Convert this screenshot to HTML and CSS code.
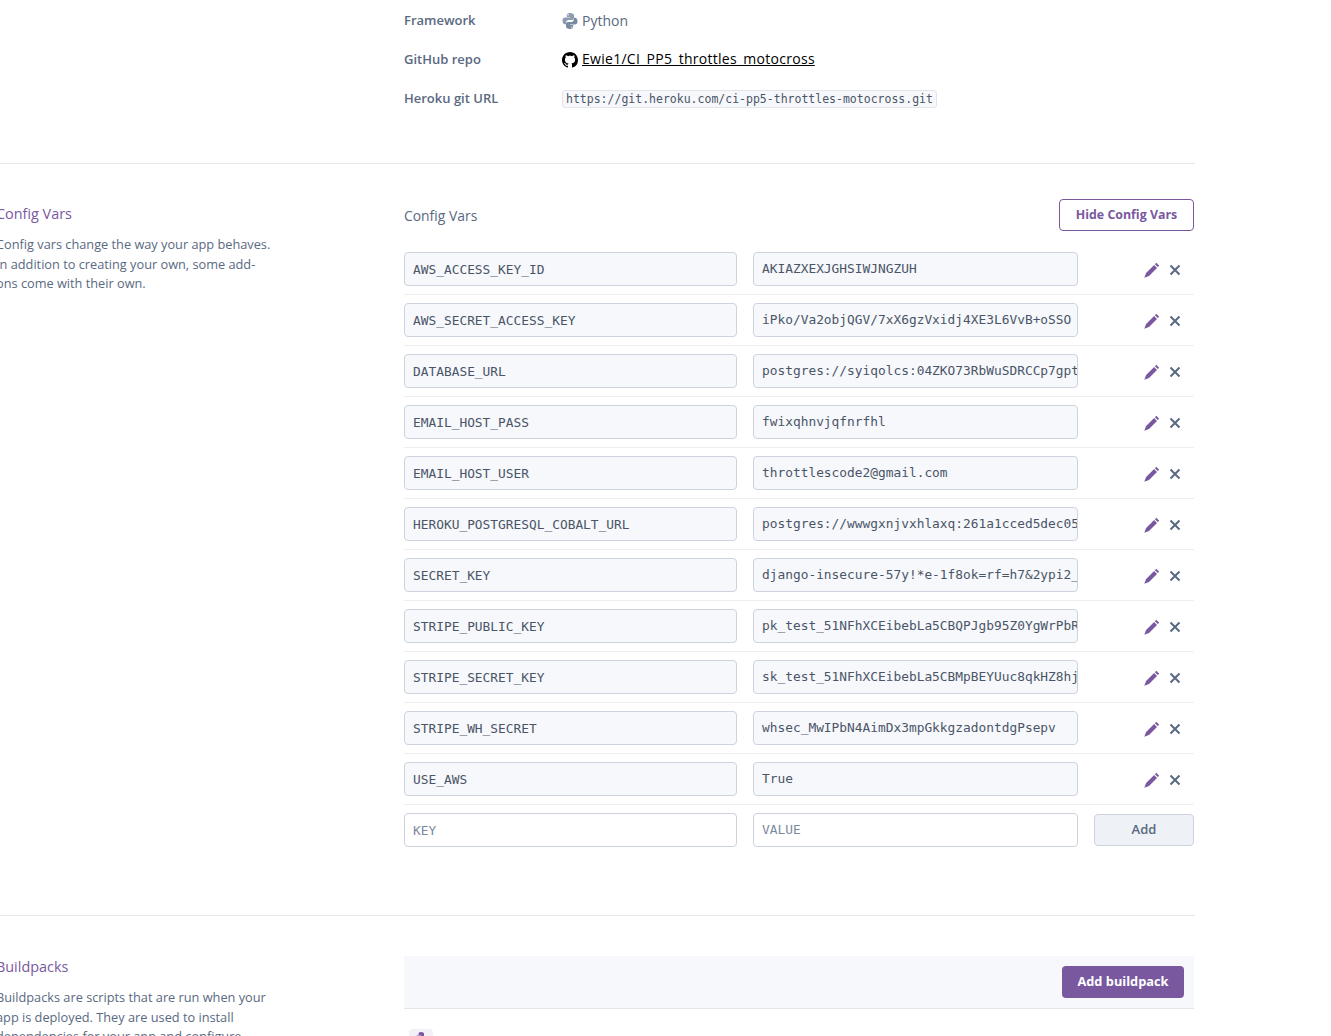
FILE: index.html
```html
<!DOCTYPE html>
<html lang="en">
<head>
    <meta charset="UTF-8">
    <meta name="viewport" content="width=device-width, initial-scale=1.0">
    <title>Settings</title>
    <link rel="stylesheet" href="styles.css">
</head>
<body>
<div class="page">

    <section class="section info-section">
        <div class="side"></div>
        <div class="main">
            <div class="info-row">
                <div class="info-label">Framework</div>
                <div class="info-value python-value">
                    <svg class="info-icon" viewBox="0 0 16 16"><path fill="#8e9bb0" d="M7.900 0C5.600 0 4.800 1 4.800 2.200V4H8v.5H3C1.600 4.500.5 5.600.5 7.800c0 2.300 1 3.500 2.400 3.500h1.300V9.500c0-1.400 1.200-2.600 2.600-2.600h3.200c1.100 0 2-.9 2-2V2.200C12 1 10.500 0 7.900 0zM6.100 1.200a.7.7 0 1 1 0 1.400.7.7 0 0 1 0-1.400z"/><path fill="#7a899f" d="M8.100 16c2.300 0 3.100-1 3.100-2.200V12H8v-.5h5c1.400 0 2.500-1.100 2.500-3.300 0-2.300-1-3.500-2.400-3.500h-1.300v1.800c0 1.400-1.200 2.600-2.600 2.600H6c-1.100 0-2 .9-2 2v2.700C4 15 5.500 16 8.100 16zm1.800-1.200a.7.7 0 1 1 0-1.400.7.7 0 0 1 0 1.400z"/></svg>
                    <span>Python</span>
                </div>
            </div>
            <div class="info-row">
                <div class="info-label">GitHub repo</div>
                <div class="info-value">
                    <svg class="info-icon github" viewBox="0 0 16 16"><path fill="#000" d="M8 0C3.580 0 0 3.580 0 8c0 3.540 2.290 6.530 5.470 7.590.4.070.55-.17.55-.38 0-.19-.01-.82-.01-1.490-2.010.370-2.530-.49-2.690-.94-.09-.23-.48-.94-.82-1.130-.28-.15-.68-.52-.01-.53.630-.01 1.080.58 1.230.82.720 1.210 1.870.87 2.330.66.070-.52.28-.87.510-1.070-1.780-.2-3.640-.89-3.640-3.950 0-.87.310-1.590.820-2.150-.08-.2-.36-1.020.08-2.120 0 0 .67-.21 2.200.82.640-.18 1.320-.27 2-.27s1.360.09 2 .27c1.530-1.040 2.200-.82 2.200-.82.440 1.100.160 1.920.080 2.120.510.560.820 1.270.820 2.150 0 3.070-1.870 3.750-3.650 3.950.290.250.540.730.540 1.480 0 1.070-.010 1.930-.010 2.200 0 .210.150.460.550.380A8.010 8.010 0 0 0 16 8c0-4.420-3.580-8-8-8z"/></svg>
                    <a class="repo-link" href="#">Ewie1/CI_PP5_throttles_motocross</a>
                </div>
            </div>
            <div class="info-row">
                <div class="info-label">Heroku git URL</div>
                <div class="info-value">
                    <code class="git-url">https://git.heroku.com/ci-pp5-throttles-motocross.git</code>
                </div>
            </div>
        </div>
    </section>

    <section class="section config-section">
        <div class="side">
            <h3 class="side-title">Config Vars</h3>
            <p class="side-text">Config vars change the way your app behaves.<br>In addition to creating your own, some add-<br>ons come with their own.</p>
        </div>
        <div class="main">
            <div class="config-head">
                <span class="config-title">Config Vars</span>
                <button class="btn-outline" type="button">Hide Config Vars</button>
            </div>
            <div id="vars"></div>
            <div class="var-row new-row">
                <input class="field key" type="text" placeholder="KEY">
                <input class="field value" type="text" placeholder="VALUE">
                <button class="btn-add" type="button">Add</button>
            </div>
        </div>
    </section>

    <section class="section build-section">
        <div class="side">
            <h3 class="side-title">Buildpacks</h3>
            <p class="side-text">Buildpacks are scripts that are run when your<br>app is deployed. They are used to install<br>dependencies for your app and configure</p>
        </div>
        <div class="main">
            <div class="build-head">
                <button class="btn-primary" type="button">Add buildpack</button>
            </div>
            <div class="build-item">
                <span class="build-badge">
                    <svg viewBox="0 0 16 16"><path fill="#79589f" d="M7.900 0C5.600 0 4.800 1 4.800 2.200V4H8v.5H3C1.600 4.500.5 5.600.5 7.800c0 2.300 1 3.500 2.400 3.500h1.300V9.500c0-1.400 1.200-2.600 2.600-2.600h3.200c1.100 0 2-.9 2-2V2.200C12 1 10.500 0 7.900 0z"/></svg>
                </span>
                <span class="build-name">heroku/python</span>
            </div>
        </div>
    </section>

</div>

<script>
    var vars = [
        ["AWS_ACCESS_KEY_ID", "AKIAZXEXJGHSIWJNGZUH"],
        ["AWS_SECRET_ACCESS_KEY", "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"],
        ["DATABASE_URL", "postgres://syiqolcs:04ZKO73RbWuSDRCCp7gptUe1"],
        ["EMAIL_HOST_PASS", "fwixqhnvjqfnrfhl"],
        ["EMAIL_HOST_USER", "throttlescode2@gmail.com"],
        ["HEROKU_POSTGRESQL_COBALT_URL", "postgres://wwwgxnjvxhlaxq:261a1cced5dec05a"],
        ["SECRET_KEY", "django-insecure-57y!*e-1f8ok=rf=h7&2ypi2_x"],
        ["STRIPE_PUBLIC_KEY", "pk_test_51NFhXCEibebLa5CBQPJgb95Z0YgWrPbRa"],
        ["STRIPE_SECRET_KEY", "sk_test_51NFhXCEibebLa5CBMpBEYUuc8qkHZ8hjb"],
        ["STRIPE_WH_SECRET", "whsec_MwIPbN4AimDx3mpGkkgzadontdgPsepv"],
        ["USE_AWS", "True"]
    ];

    var pencil = '<svg class="icon-edit" viewBox="0 0 16 16"><path d="M12.300.8l2.900 2.900-1.400 1.400-2.900-2.900zM10.100 3l2.900 2.900-8 8L0.300 15.700l1.800-4.700z"/></svg>';
    var cross = '<svg class="icon-remove" viewBox="0 0 12 12"><path d="M1.500 1.500l9 9M10.500 1.500l-9 9"/></svg>';
    var html = "";

    for (var i = 0; i < vars.length; i++) {
        html += '<div class="var-row">' +
            '<input class="field key filled" type="text" readonly value="' + vars[i][0] + '">' +
            '<input class="field value filled" type="text" readonly value="' + vars[i][1].replace(/&/g, "&amp;") + '">' +
            '<div class="var-actions">' + pencil + cross + '</div>' +
            '</div>';
    }

    document.getElementById("vars").innerHTML = html;
</script>
</body>
</html>
```

FILE: styles.css
```css
html, body {
    margin: 0;
    height: 100%;
    overflow: hidden;
    background: #fff;
}

body {
    font-family: "Open Sans", Arial, sans-serif;
    font-size: 13px;
    color: #596981;
}

.page {
    width: 1199px;
    margin-left: -4px;
}

.section {
    display: grid;
    grid-template-columns: 408px 790px;
    border-bottom: 1px solid #e7e7ea;
}

.info-section {
    padding-bottom: 46px;
}

.config-section {
    padding-top: 35px;
    padding-bottom: 60px;
}

.build-section {
    padding-top: 40px;
    border-bottom: none;
}

.info-row {
    display: flex;
    align-items: center;
    height: 39px;
}

.info-label {
    width: 158px;
    font-weight: 600;
    font-size: 13px;
    color: #596981;
}

.info-value {
    display: flex;
    align-items: center;
    font-size: 14px;
}

.python-value {
    padding-top: 2px;
}

.info-icon {
    width: 16px;
    height: 16px;
    margin-right: 4px;
}

.github {
    margin-top: 3px;
}

.repo-link {
    color: #000;
    font-size: 14px;
    letter-spacing: 0.28px;
}

.git-url {
    font-family: "DejaVu Sans Mono", monospace;
    font-size: 11.5px;
    line-height: 15px;
    margin-top: 2px;
    padding: 1px 3px 0;
    background: #f7f8fb;
    border: 1px solid #e3e5ea;
    border-radius: 3px;
    color: #4a5568;
}

.side-title {
    margin: 5px 0 0;
    font-size: 14.4px;
    font-weight: 400;
    line-height: 20px;
    color: #79589f;
}

.side-text {
    margin: 11px 0 0;
    font-size: 12.75px;
    line-height: 19.5px;
    color: #596981;
}

.build-section .side-title {
    margin-top: 1px;
}

.build-section .side-text {
    margin-top: 11px;
}

.config-head {
    display: flex;
    justify-content: space-between;
    align-items: center;
    height: 32px;
    margin-bottom: 13px;
}

.config-title {
    font-size: 13.9px;
    color: #596981;
}

.btn-outline {
    width: 135px;
    height: 32px;
    padding: 0 0 2px;
    background: #fff;
    border: 1px solid #79589f;
    border-radius: 4px;
    font-family: inherit;
    font-size: 12.4px;
    font-weight: 700;
    color: #79589f;
}

.var-row {
    display: flex;
    align-items: center;
    gap: 16px;
    padding: 8px 0;
    border-bottom: 1px solid #eeeef1;
}

.new-row {
    border-bottom: none;
}

.field {
    height: 34px;
    box-sizing: border-box;
    padding: 0 8px;
    background: #fff;
    border: 1px solid #ccd3de;
    border-radius: 4px;
    font-family: "DejaVu Sans Mono", monospace;
    font-size: 12.85px;
    color: #4a5568;
    outline: none;
}

.field.filled {
    background: #f7f8fb;
}

.field::placeholder {
    color: #7d8a9e;
    opacity: 1;
}

.key {
    width: 333px;
}

.value {
    width: 325px;
    padding-right: 0;
    padding-bottom: 2px;
}

.var-actions {
    display: flex;
    align-items: center;
    justify-content: flex-end;
    width: 100px;
    padding-top: 2px;
    padding-right: 13px;
    box-sizing: border-box;
    gap: 9px;
}

.icon-edit {
    width: 16px;
    height: 16px;
    fill: #79589f;
}

.icon-remove {
    width: 12px;
    height: 12px;
    fill: none;
    stroke: #596981;
    stroke-width: 2;
}

.btn-add {
    width: 100px;
    height: 32px;
    padding: 0 0 2px;
    background: #eef1f6;
    border: 1px solid #ccd3de;
    border-radius: 4px;
    font-family: inherit;
    font-size: 13px;
    font-weight: 600;
    color: #596981;
}

.build-head {
    display: flex;
    justify-content: flex-end;
    padding: 10px;
    background: #f7f8fb;
    border-bottom: 1px solid #e3e5ea;
}

.btn-primary {
    width: 122px;
    height: 32px;
    padding: 0 0 2px;
    background: #79589f;
    border: none;
    border-radius: 4px;
    font-family: inherit;
    font-size: 12.8px;
    font-weight: 700;
    color: #fff;
}

.build-item {
    display: flex;
    align-items: flex-start;
    gap: 16px;
    padding: 20px 5px 0;
}

.build-badge {
    display: flex;
    justify-content: center;
    box-sizing: border-box;
    width: 24px;
    height: 24px;
    padding-top: 3px;
    background: #f3f0f8;
    border-radius: 4px;
}

.build-badge svg {
    width: 12px;
    height: 12px;
}

.build-name {
    margin-top: 3px;
    font-size: 13px;
    line-height: 18px;
}
```
